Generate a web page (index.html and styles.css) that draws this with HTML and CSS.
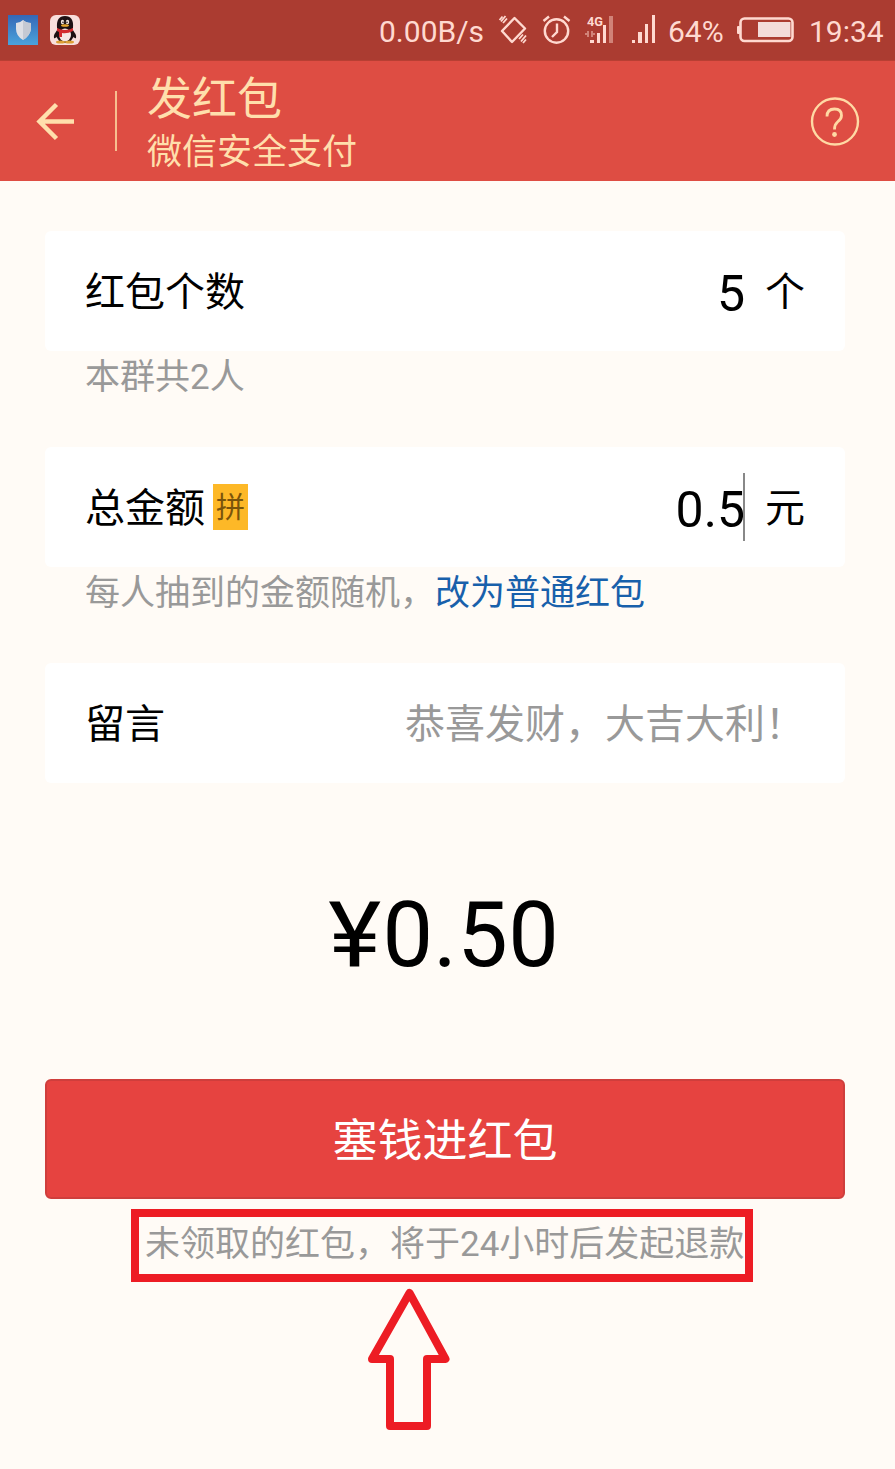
FILE: index.html
```html
<!DOCTYPE html>
<html lang="zh-CN">
	<head>
		<meta charset="utf-8">
		<title>发红包</title>
		<meta name="viewport" content="width=device-width, initial-scale=1">
		<link rel="stylesheet" href="styles.css">
	</head>
	<body>
		<div class="status">
			<svg class="app-icon" width="30" height="30" viewBox="0 0 30 30">
				<defs>
					<linearGradient id="sky" x1="0" y1="0" x2="0" y2="1">
						<stop offset="0" stop-color="#3567b6"/>
						<stop offset="1" stop-color="#4aa3dc"/>
					</linearGradient>
				</defs>
				<rect width="30" height="30" fill="url(#sky)"/>
				<path d="M15 5 Q18 8 23 8 V14 Q22 21 15 25 Q8 21 8 14 V8 Q12 8 15 5Z" fill="#dedfe5"/>
				<path d="M15 5 Q18 8 23 8 V14 Q22 21 15 25Z" fill="#c5c9d3"/>
			</svg>
			<svg class="app-icon qq" width="30" height="30" viewBox="0 0 30 30">
				<rect width="30" height="30" rx="6" fill="#f8dfdc"/>
				<path d="M8 15 Q3 19 4 23 Q6 24 8 20Z M22 15 Q27 19 26 23 Q24 24 22 20Z" fill="#1d1113"/>
				<ellipse cx="15" cy="19" rx="9" ry="9" fill="#1d1113"/>
				<path d="M7 13 Q6 1 15 1 Q24 1 23 13 Q19 18 15 18 Q11 18 7 13Z" fill="#1d1113"/>
				<ellipse cx="15" cy="20" rx="6" ry="6.5" fill="#f5e6e4"/>
				<ellipse cx="12.5" cy="7" rx="1.7" ry="2.2" fill="#f3e5e1"/>
				<ellipse cx="17.5" cy="7" rx="1.7" ry="2.2" fill="#f3e5e1"/>
				<circle cx="13" cy="7.3" r=".8" fill="#1d1113"/>
				<circle cx="17" cy="7.3" r=".8" fill="#1d1113"/>
				<ellipse cx="15" cy="10.500" rx="4" ry="1.300" fill="#e8a52c"/>
				<path d="M7 13 Q15 17 23 13 V16 Q17 19 12 18 V22 H9 V17 L7 16Z" fill="#d22a2e"/>
				<ellipse cx="10.500" cy="27" rx="4.500" ry="1.500" fill="#dc9f35"/>
				<ellipse cx="19.500" cy="27" rx="4.500" ry="1.500" fill="#dc9f35"/>
			</svg>
			<span class="speed">0.00B/s</span>
			<svg class="shake" width="30" height="30" viewBox="0 0 30 30" fill="none" stroke="#ffd9d0" stroke-width="2.400">
				<path d="M15.500 3 L26 13.500 L13 27 L3 16Z" stroke-linejoin="round"/>
				<path d="M6.500 1 L2 6.500 M3.500 1.500 L.5 5 M8 3.500 L4 8 M27 20.500 L22 26.500 M24 19.500 L20 24 M27 24.500 L24 28" stroke-width="1.800"/>
			</svg>
			<svg class="alarm" width="30" height="30" viewBox="0 0 30 30" fill="none" stroke="#ffd9d0" stroke-width="2.400">
				<circle cx="14.500" cy="16" r="11.700"/>
				<path d="M15 8.500 V17 L10 22 M1.500 6 L7 1.500 M22 1.500 L27.500 6"/>
			</svg>
			<svg class="sim1" width="30" height="30" viewBox="0 0 30 30" fill="#ffd9d0">
				<text x="2" y="11" class="net" textLength="16" lengthAdjust="spacingAndGlyphs">4G</text>
				<path d="M5 25h4v3H5z M12 18h3v10h-3z M18 10h3v18h-3z"/>
				<path d="M24 1h4v27h-4z M2 16h2v6H2z M0 18h2v2H0z M6 16h2v6H6z M8 18h2v2H8z" opacity=".45"/>
			</svg>
			<svg class="sim2" width="25" height="30" viewBox="0 0 25 30" fill="#ffd9d0">
				<path d="M0 25h3v3H0z M6 17h4v11H6z M13 9h3v19h-3z M20 0h3v28h-3z"/>
			</svg>
			<span class="percent">64%</span>
			<svg class="battery" width="60" height="26" viewBox="0 0 60 26">
				<rect x="3.500" y="1.500" width="52" height="22.500" rx="4" fill="none" stroke="#ffd9d0" stroke-width="2.600"/>
				<rect x="0" y="9" width="3" height="8" rx="1" fill="#ffd9d0"/>
				<rect x="21" y="5" width="32.500" height="15" fill="#f3dcda"/>
			</svg>
			<span class="clock">19:34</span>
		</div>

		<div class="header">
			<svg class="back" width="40" height="40" viewBox="0 0 40 40" fill="none" stroke="#ffdfac" stroke-width="4.500">
				<path d="M39 20.500 H5 M21.500 3.500 L4.500 20.500 L21.500 37.500"/>
			</svg>
			<div class="line"></div>
			<div class="titles">
				<h1>发红包</h1>
				<p>微信安全支付</p>
			</div>
			<svg class="help" width="50" height="50" viewBox="0 0 50 50" fill="none" stroke="#ffd9a4">
				<circle cx="25" cy="24.500" r="23" stroke-width="2.400"/>
				<path d="M17 19.500 Q17 12 24.500 12 Q31.500 12 31.500 18.500 Q31.500 22 27.500 25 Q24.500 27.500 24.500 32.500" stroke-width="2.800"/>
				<circle cx="24.500" cy="37.500" r="2.400" fill="#ffd9a4" stroke="none"/>
			</svg>
		</div>

		<div class="content">
			<div class="card">
				<span class="label">红包个数</span>
				<span class="value">5</span>
				<span class="unit">个</span>
			</div>
			<p class="hint">本群共2人</p>

			<div class="card">
				<span class="label">总金额</span>
				<span class="tag">拼</span>
				<span class="value">0.5</span>
				<span class="cursor"></span>
				<span class="unit">元</span>
			</div>
			<p class="hint">每人抽到的金额随机，<a class="link">改为普通红包</a></p>

			<div class="card">
				<span class="label">留言</span>
				<span class="wish">恭喜发财，大吉大利！</span>
			</div>

			<div class="total"><span class="yen">¥</span>0.50</div>
			<button class="button">塞钱进红包</button>
			<div class="notice">未领取的红包，将于24小时后发起退款</div>
			<svg class="arrow" width="84" height="144" viewBox="0 0 84 144" fill="none" stroke="#ed1c24" stroke-width="8" stroke-linejoin="round">
				<path d="M42.500 6 L78.500 72 H60 V139 H23 V72 H5Z"/>
			</svg>
		</div>
	</body>
</html>
```
FILE: styles.css
```css
* {box-sizing: border-box;}

body {
	margin: 0;
	height: 1469px;
	overflow: hidden;
	background-color: #fffbf6;
	color: #000;
	font-family: Roboto, "Noto Sans CJK SC", sans-serif;
}

h1, p {
	margin: 0;
	font-weight: normal;
}

svg {
	display: block;
	flex: none;
	overflow: visible;
}

/* status bar */
.status {
	display: flex;
	height: 61px;
	padding: 15px 0 0 8px;
	background-color: #ab3c31;
	border-bottom: 1px solid #b83f33;
	color: #ffd9d0;
	font-size: 30px;
	line-height: 34px;
	white-space: nowrap;
}
.qq {margin-left: 12px;}
.speed {
	width: 104px;
	margin-left: 299px;
}
.shake {margin-left: 16px;}
.alarm {margin-left: 13px;}
.sim1 {margin-left: 13px;}
.net {
	font: bold 13px Roboto, sans-serif;
}
.sim2 {margin-left: 17px;}
.percent {
	width: 56px;
	margin-left: 11px;
}
.battery {
	margin-left: 13px;
	margin-top: 2px;
}
.clock {margin-left: 12px;}

/* header */
.header {
	display: flex;
	height: 120px;
	background-color: #de4d43;
	color: #ffdfac;
}
.back {margin: 40px 0 0 35px;}
.line {
	width: 2px;
	height: 60px;
	margin: 30px 0 0 40px;
	background-color: #f7bf90;
}
.titles {
	flex: 1;
	padding: 9px 0 0 30px;
}
.titles h1 {
	font-size: 45px;
	line-height: 60px;
}
.titles p {
	font-size: 35px;
	line-height: 46px;
}
.help {margin: 36px 35px 0 0;}

/* form */
.content {
	padding: 50px 50px 0 45px;
}
.card {
	display: flex;
	align-items: center;
	height: 120px;
	padding: 0 40px;
	border-radius: 6px;
	background-color: #fff;
	font-size: 40px;
	line-height: 60px;
}
.label, .unit, .wish {padding-top: 4px;}
.value {
	margin-left: auto;
	padding-top: 5px;
	font-size: 50px;
}
.unit {margin-left: 20px;}
.cursor {
	width: 2px;
	height: 68px;
	margin-left: -2px;
	background-color: #888;
}
.tag {
	width: 35px;
	height: 46px;
	margin-left: 8px;
	background-color: #fdb827;
	color: #7a540b;
	font-size: 29px;
	line-height: 48px;
	text-align: center;
}
.hint {
	height: 96px;
	padding-left: 40px;
	color: #999;
	font-size: 35px;
	line-height: 54px;
}
.link {color: #1860ab;}
.wish {
	margin-left: auto;
	color: #999;
}

.total {
	margin-top: 93px;
	font-size: 90px;
	line-height: 120px;
	letter-spacing: .3px;
	text-align: center;
}
.yen {
	display: inline-block;
	margin-right: 4px;
	transform: scaleX(1.12);
}
.button {
	display: block;
	width: 800px;
	height: 120px;
	margin-top: 83px;
	padding: 0 0 3px;
	border: 2px solid #cf3e3c;
	border-radius: 6px;
	background-color: #e64340;
	color: #fff;
	font-family: inherit;
	font-size: 45px;
}

/* highlighted notice */
.notice {
	width: 622px;
	height: 73px;
	margin: 10px 0 0 86px;
	padding-left: 6px;
	border: 8px solid #ed1c24;
	color: #999;
	font-size: 35px;
	line-height: 56px;
	white-space: nowrap;
}
.arrow {margin: 5px 0 0 322px;}
```
